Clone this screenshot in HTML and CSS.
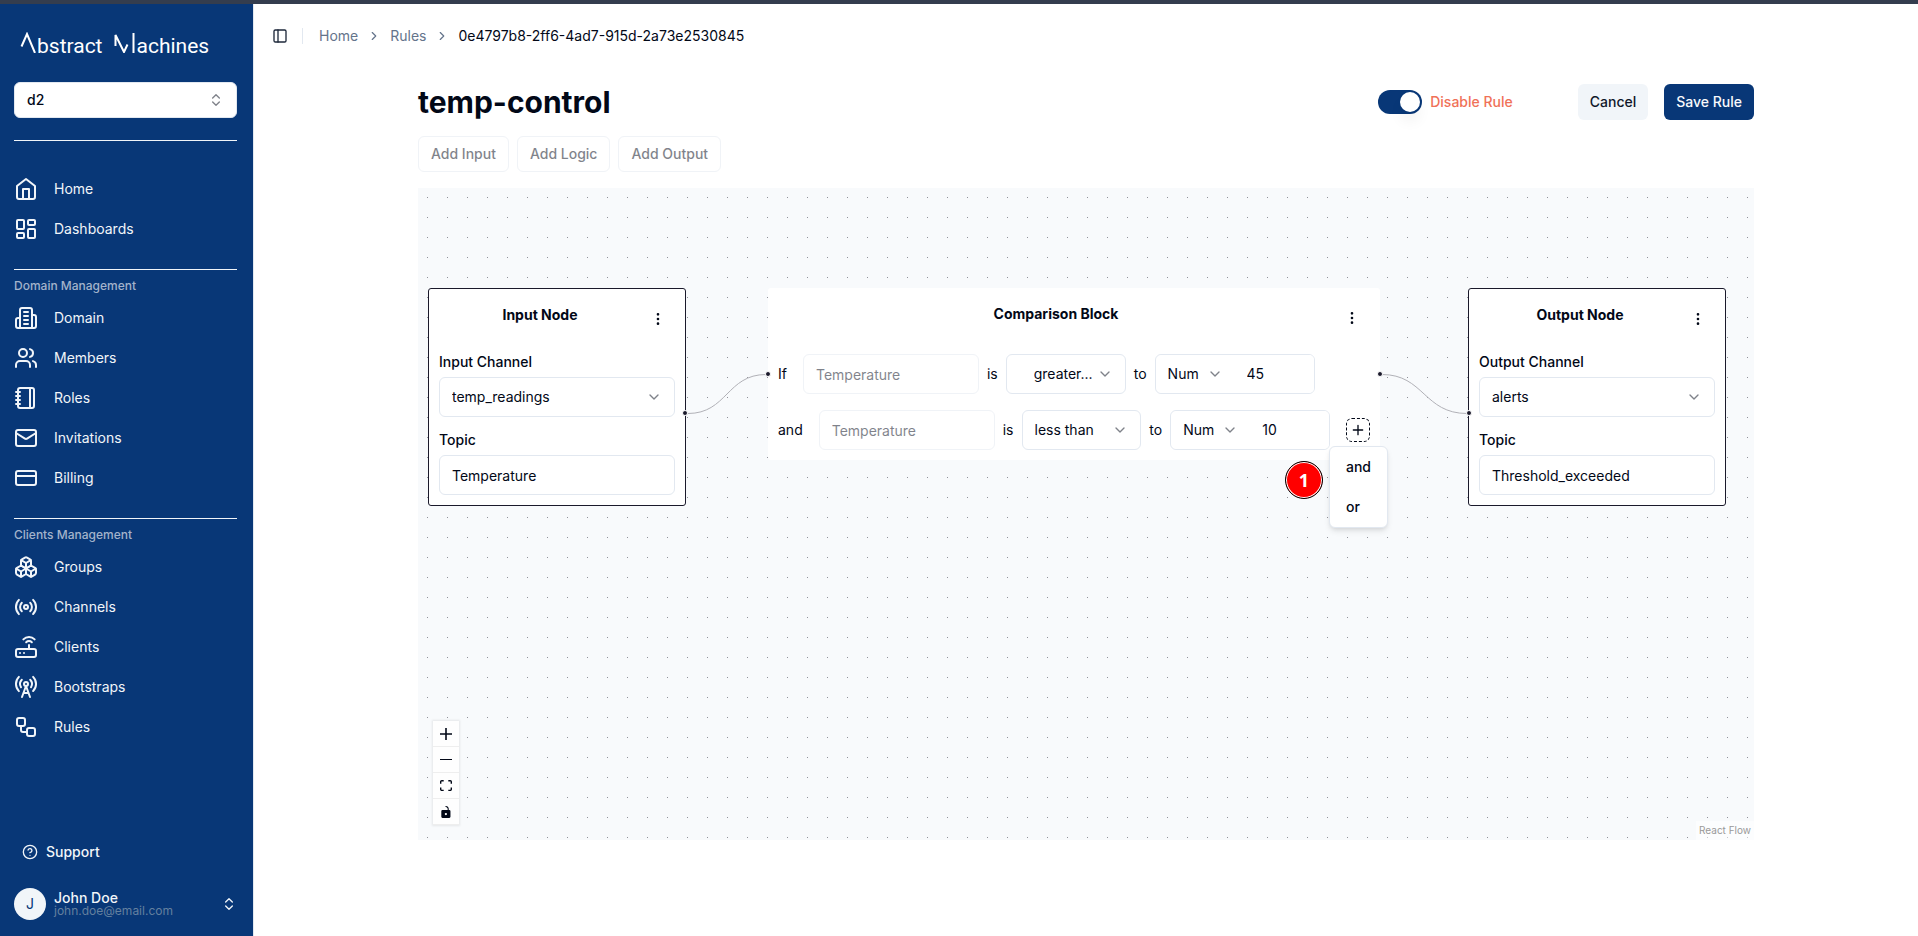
FILE: index.html
```html
<!DOCTYPE html>
<html lang="en">
<head>
<meta charset="utf-8">
<title>temp-control</title>
<link rel="stylesheet" href="styles.css">
</head>
<body>
<svg class="sprite" aria-hidden="true">
  <symbol id="chevron-down" viewBox="0 0 24 24"><path d="m6 9 6 6 6-6"/></symbol>
  <symbol id="chevron-right" viewBox="0 0 24 24"><path d="m9 18 6-6-6-6"/></symbol>
  <symbol id="chevrons" viewBox="0 0 24 24"><path d="m7 15 5 5 5-5M7 9l5-5 5 5"/></symbol>
  <symbol id="dots" viewBox="0 0 24 24"><circle cx="12" cy="12" r="1"/><circle cx="12" cy="5" r="1"/><circle cx="12" cy="19" r="1"/></symbol>
</svg>
<div class="app">
  <aside class="sidebar">
    <div class="logo" role="img" aria-label="Abstract Machines">
      <svg class="logo-mark" width="17" height="21" viewBox="0 0 17 21"><path d="M1.500 14.500 7 2 15 21"/></svg>
      <span class="logo-text">bstract</span>
      <svg class="logo-mark logo-mark-second" width="23" height="21" viewBox="0 0 23 21"><path d="M1.500 14V3L10 20 13.500 12.500M19.500 1v20"/></svg>
      <span class="logo-text">achines</span>
    </div>
    <div class="select-wrap domain-select">
      <select aria-label="Domain"><option>d2</option></select>
      <svg class="icon small"><use href="#chevrons"/></svg>
    </div>
    <nav class="nav">
      <section class="group group-first">
        <a href="#"><svg class="icon" viewBox="0 0 24 24"><path d="m3 9 9-7 9 7v11a2 2 0 0 1-2 2H5a2 2 0 0 1-2-2z"/><path d="M9 22V12h6v10"/></svg>Home</a>
        <a href="#"><svg class="icon" viewBox="0 0 24 24"><rect width="7" height="9" x="3" y="3" rx="1"/><rect width="7" height="5" x="14" y="3" rx="1"/><rect width="7" height="9" x="14" y="12" rx="1"/><rect width="7" height="5" x="3" y="16" rx="1"/></svg>Dashboards</a>
      </section>
      <section class="group">
        <h2>Domain Management</h2>
        <a href="#"><svg class="icon" viewBox="0 0 24 24"><path d="M6 22V4a2 2 0 0 1 2-2h8a2 2 0 0 1 2 2v18Z"/><path d="M6 12H4a2 2 0 0 0-2 2v6a2 2 0 0 0 2 2h2M18 9h2a2 2 0 0 1 2 2v9a2 2 0 0 1-2 2h-2M10 6h4M10 10h4M10 14h4M10 18h4"/></svg>Domain</a>
        <a href="#"><svg class="icon" viewBox="0 0 24 24"><path d="M16 21v-2a4 4 0 0 0-4-4H6a4 4 0 0 0-4 4v2"/><circle cx="9" cy="7" r="4"/><path d="M22 21v-2a4 4 0 0 0-3-3.870M16 3.130a4 4 0 0 1 0 7.750"/></svg>Members</a>
        <a href="#"><svg class="icon" viewBox="0 0 24 24"><path d="M2 6h4M2 10h4M2 14h4M2 18h4M16 2v20"/><rect width="16" height="20" x="4" y="2" rx="2"/></svg>Roles</a>
        <a href="#"><svg class="icon" viewBox="0 0 24 24"><rect width="20" height="16" x="2" y="4" rx="2"/><path d="m22 7-8.970 5.700a1.940 1.940 0 0 1-2.060 0L2 7"/></svg>Invitations</a>
        <a href="#"><svg class="icon" viewBox="0 0 24 24"><rect width="20" height="14" x="2" y="5" rx="2"/><path d="M2 10h20"/></svg>Billing</a>
      </section>
      <section class="group">
        <h2>Clients Management</h2>
        <a href="#"><svg class="icon" viewBox="0 0 24 24"><path d="M2.970 12.920A2 2 0 0 0 2 14.630v3.240a2 2 0 0 0 .970 1.710l3 1.800a2 2 0 0 0 2.060 0L12 19v-5.500l-5-3-4.030 2.420Z"/><path d="m7 16.500-4.740-2.850M7 16.500l5-3M7 16.500v5.170"/><path d="M12 13.500V19l3.970 2.380a2 2 0 0 0 2.060 0l3-1.800a2 2 0 0 0 .970-1.710v-3.240a2 2 0 0 0-.970-1.710L17 10.500l-5 3Z"/><path d="m17 16.500-5-3M17 16.500l4.740-2.850M17 16.500v5.170"/><path d="M7.970 4.420A2 2 0 0 0 7 6.130v4.370l5 3 5-3V6.130a2 2 0 0 0-.970-1.710l-3-1.800a2 2 0 0 0-2.060 0l-3 1.800Z"/><path d="M12 8 7.260 5.150M12 8l4.740-2.850M12 13.500V8"/></svg>Groups</a>
        <a href="#"><svg class="icon" viewBox="0 0 24 24"><path d="M4.900 19.100C1 15.200 1 8.800 4.900 4.900M7.800 16.200c-2.300-2.300-2.300-6.100 0-8.500M16.200 7.800c2.300 2.300 2.300 6.100 0 8.500M19.100 4.900C23 8.800 23 15.100 19.100 19"/><circle cx="12" cy="12" r="2"/></svg>Channels</a>
        <a href="#"><svg class="icon" viewBox="0 0 24 24"><rect width="20" height="8" x="2" y="14" rx="2"/><path d="M6.010 18H6M10.010 18H10M15 10v4M17.840 7.170a4 4 0 0 0-5.660 0M20.660 4.340a8 8 0 0 0-11.310 0"/></svg>Clients</a>
        <a href="#"><svg class="icon" viewBox="0 0 24 24"><path d="M4.900 16.100C1 12.200 1 5.800 4.900 1.900M7.800 4.700a6.140 6.140 0 0 0-.8 7.500M16.200 4.800c2 2 2.260 5.110.8 7.470M19.100 1.900a9.960 9.960 0 0 1 0 14.100M9.500 18h5M8 22l4-11 4 11"/><circle cx="12" cy="9" r="2"/></svg>Bootstraps</a>
        <a href="#"><svg class="icon" viewBox="0 0 24 24"><rect width="8" height="8" x="3" y="3" rx="2"/><path d="M7 11v4a2 2 0 0 0 2 2h4"/><rect width="8" height="8" x="13" y="13" rx="2"/></svg>Rules</a>
      </section>
    </nav>
    <footer class="sidebar-footer">
      <a class="support" href="#"><svg class="icon small" viewBox="0 0 24 24"><circle cx="12" cy="12" r="10"/><path d="M9.090 9a3 3 0 0 1 5.830 1c0 2-3 3-3 3M12 17h.010"/></svg>Support</a>
      <button class="user" type="button">
        <span class="avatar">J</span>
        <span class="user-info"><span class="user-name">John Doe</span><span class="user-email">john.doe@email.com</span></span>
        <svg class="icon small"><use href="#chevrons"/></svg>
      </button>
    </footer>
  </aside>

  <div class="page">
    <header class="topbar">
      <button class="bare" type="button" aria-label="Toggle sidebar"><svg class="icon small" viewBox="0 0 24 24"><rect width="18" height="18" x="3" y="3" rx="2"/><path d="M9 3v18"/></svg></button>
      <span class="divider"></span>
      <nav class="crumbs" aria-label="Breadcrumb">
        <a href="#">Home</a>
        <svg class="icon tiny"><use href="#chevron-right"/></svg>
        <a href="#">Rules</a>
        <svg class="icon tiny"><use href="#chevron-right"/></svg>
        <span class="current">0e4797b8-2ff6-4ad7-915d-2a73e2530845</span>
      </nav>
    </header>
    <main class="content">
      <div class="title-row">
        <h1>temp-control</h1>
        <label class="toggle"><input type="checkbox" role="switch" checked>Disable Rule</label>
        <div class="actions">
          <button class="btn secondary" type="button">Cancel</button>
          <button class="btn primary" type="button">Save Rule</button>
        </div>
      </div>
      <div class="add-row">
        <button class="btn outline" type="button" disabled>Add Input</button>
        <button class="btn outline" type="button" disabled>Add Logic</button>
        <button class="btn outline" type="button" disabled>Add Output</button>
      </div>
      <div class="canvas">
        <svg class="edges" width="1336" height="400" viewBox="0 0 1336 400">
          <path d="M270 225.500C309 225.500 309 186.500 348 186.500"/>
          <path d="M964 186.500C1006 186.500 1006 225.500 1049 225.500"/>
        </svg>

        <section class="node node-input">
          <header class="node-head"><h3>Input Node</h3><button class="bare menu-btn" type="button" aria-label="Input node menu"><svg class="icon small"><use href="#dots"/></svg></button></header>
          <div class="field">
            <label for="in-channel">Input Channel</label>
            <div class="select-wrap"><select id="in-channel"><option>temp_readings</option></select><svg class="icon small"><use href="#chevron-down"/></svg></div>
          </div>
          <div class="field">
            <label for="in-topic">Topic</label>
            <input class="box" id="in-topic" type="text" value="Temperature">
          </div>
          <span class="handle handle-right"></span>
        </section>

        <section class="node node-compare">
          <header class="node-head"><h3>Comparison Block</h3><button class="bare menu-btn" type="button" aria-label="Comparison block menu"><svg class="icon small"><use href="#dots"/></svg></button></header>
          <div class="cond">
            <span class="lead">If</span>
            <input class="box faded" type="text" value="Temperature" aria-label="First field" disabled>
            <span>is</span>
            <div class="select-wrap op op-clipped"><select aria-label="First operator"><option>greater...</option></select><svg class="icon small"><use href="#chevron-down"/></svg></div>
            <span>to</span>
            <div class="value">
              <div class="select-wrap"><select aria-label="First value type"><option>Num</option></select><svg class="icon small"><use href="#chevron-down"/></svg></div>
              <input type="text" value="45" aria-label="First value">
            </div>
          </div>
          <div class="cond">
            <span class="lead">and</span>
            <input class="box faded" type="text" value="Temperature" aria-label="Second field" disabled>
            <span>is</span>
            <div class="select-wrap op"><select aria-label="Second operator"><option>less than</option></select><svg class="icon small"><use href="#chevron-down"/></svg></div>
            <span>to</span>
            <div class="value">
              <div class="select-wrap"><select aria-label="Second value type"><option>Num</option></select><svg class="icon small"><use href="#chevron-down"/></svg></div>
              <input type="text" value="10" aria-label="Second value">
            </div>
            <button class="add-cond" type="button" aria-label="Add condition"><svg class="icon small" viewBox="0 0 24 24"><path d="M5 12h14M12 5v14"/></svg></button>
          </div>
          <span class="handle handle-left"></span>
          <span class="handle handle-right"></span>
          <div class="popover">
            <button type="button">and</button>
            <button type="button">or</button>
          </div>
          <span class="badge">1</span>
        </section>

        <section class="node node-output">
          <header class="node-head"><h3>Output Node</h3><button class="bare menu-btn" type="button" aria-label="Output node menu"><svg class="icon small"><use href="#dots"/></svg></button></header>
          <div class="field">
            <label for="out-channel">Output Channel</label>
            <div class="select-wrap"><select id="out-channel"><option>alerts</option></select><svg class="icon small"><use href="#chevron-down"/></svg></div>
          </div>
          <div class="field">
            <label for="out-topic">Topic</label>
            <input class="box" id="out-topic" type="text" value="Threshold_exceeded">
          </div>
          <span class="handle handle-left"></span>
        </section>

        <div class="controls">
          <button type="button" aria-label="Zoom in"><svg viewBox="0 0 32 32"><path d="M32 18.133H18.133V32h-4.266V18.133H0v-4.266h13.867V0h4.266v13.867H32z"/></svg></button>
          <button type="button" aria-label="Zoom out"><svg viewBox="0 0 32 5"><path d="M0 0h32v4.200H0z"/></svg></button>
          <button type="button" aria-label="Fit view"><svg viewBox="0 0 32 30"><path d="M3.692 4.630c0-.530.400-.938.939-.938h5.215V0H4.708C2.130 0 0 2.054 0 4.630v5.216h3.692V4.631zM27.354 0h-5.200v3.692h5.170c.530 0 .984.400.984.939v5.215H32V4.631A4.624 4.624 0 0027.354 0zm.954 24.830c0 .532-.400.940-.939.940h-5.215v3.768h5.215c2.577 0 4.631-2.130 4.631-4.707v-5.139h-3.692v5.139zm-23.677.940a.919.919 0 01-.939-.940v-5.138H0v5.139c0 2.577 2.130 4.707 4.708 4.707h5.138V25.770H4.631z"/></svg></button>
          <button type="button" aria-label="Toggle lock"><svg viewBox="0 0 25 32"><path d="M21.333 10.667H19.810V7.619C19.810 3.429 16.380 0 12.190 0c-4.114 1.828-1.370 2.133.305 2.438 1.676.305 4.420 2.590 4.420 5.181v3.048H3.047A3.056 3.056 0 000 13.714v15.238A3.056 3.056 0 003.048 32h18.285a3.056 3.056 0 003.048-3.048V13.714a3.056 3.056 0 00-3.048-3.047zM12.190 24.533a3.056 3.056 0 01-3.047-3.047 3.056 3.056 0 013.047-3.048 3.056 3.056 0 013.048 3.048 3.056 3.056 0 01-3.048 3.047z"/></svg></button>
        </div>
        <a class="attribution" href="#">React Flow</a>
      </div>
    </main>
  </div>
</div>
</body>
</html>
```
FILE: styles.css
```css
* { box-sizing: border-box; }
body { margin: 0; background: #fff; color: #020817; font: 14px/20px Inter, sans-serif; }
h1, h2, h3 { margin: 0; }
a { color: inherit; text-decoration: none; }
button, input, select { margin: 0; font: inherit; color: inherit; }
.sprite { position: absolute; width: 0; height: 0; }
.icon { width: 24px; height: 24px; flex: none; fill: none; stroke: currentColor; stroke-width: 2; stroke-linecap: round; stroke-linejoin: round; }
.icon.small { width: 16px; height: 16px; }
.icon.tiny { width: 14px; height: 14px; }
.bare { padding: 0; border: 0; background: none; display: flex; align-items: center; justify-content: center; }

.app { display: flex; min-height: 100vh; border-top: 4px solid #343d4e; }

.sidebar { width: 254px; flex: none; display: flex; flex-direction: column; padding: 28px 16px 16px 14px; background: #083777; border-right: 1px solid #e2e8f0; color: #f1f5f9; }
.logo { display: flex; align-items: baseline; height: 22px; margin: 0 0 28px 6px; }
.logo-mark { flex: none; fill: none; stroke: #fff; stroke-width: 2; }
.logo-mark-second { margin-left: 11px; }
.logo-text { font: 21px/22px Roboto, sans-serif; color: #fff; }
.select-wrap { position: relative; display: flex; color: #020817; }
.select-wrap select { appearance: none; width: 100%; height: 40px; padding: 0 32px 0 12px; border: 1px solid #e2e8f0; border-radius: 6px; background: #fff; }
.select-wrap .icon { position: absolute; right: 13px; top: 50%; margin-top: -8px; opacity: .5; pointer-events: none; }
.domain-select select { height: 36px; font-weight: 500; }
.group { display: flex; flex-direction: column; margin-top: 20px; padding-top: 6px; border-top: 1px solid #f1f5f9; }
.group-first { padding-top: 28px; margin-top: 22px; }
.group h2 { font-size: 12px; line-height: 20px; font-weight: 500; margin-bottom: 2px; color: #a3b3cb; }
.group a { display: flex; align-items: center; gap: 16px; height: 40px; }
.sidebar-footer { margin-top: auto; display: flex; flex-direction: column; gap: 26px; }
.support { display: flex; align-items: center; gap: 8px; padding-left: 8px; font-weight: 500; }
.user { display: flex; align-items: center; gap: 8px; padding: 0; border: 0; background: none; text-align: left; }
.avatar { width: 32px; height: 32px; border-radius: 50%; display: grid; place-items: center; background: #f1f5f9; color: #083777; }
.user-info { flex: 1; display: flex; flex-direction: column; line-height: 14px; }
.user-name { font-weight: 500; }
.user-email { font-size: 12px; line-height: 12px; color: #64809f; }

.page { flex: 1; min-width: 0; display: flex; flex-direction: column; }
.topbar { display: flex; align-items: center; height: 64px; padding: 0 18px; }
.topbar .bare { color: #1e293b; }
.divider { width: 1px; height: 16px; margin: 0 16px 0 14px; background: #e2e8f0; }
.crumbs { display: flex; align-items: center; gap: 9px; color: #64748b; }
.current { color: #020817; }
.content { flex: 1; display: flex; flex-direction: column; gap: 16px; width: 100%; max-width: 1400px; margin: 0 auto; padding: 16px 32px 96px; }
.title-row { display: flex; align-items: center; }
.title-row h1 { flex: 1; font-size: 30px; line-height: 36px; font-weight: 700; }
.toggle { display: flex; align-items: center; gap: 8px; color: #f07158; font-weight: 500; }
.toggle input { appearance: none; width: 44px; height: 24px; margin: 0; padding: 2px; border-radius: 12px; background: #083777; display: flex; justify-content: flex-end; }
.toggle input::before { content: ""; width: 20px; height: 20px; border-radius: 50%; background: #fff; box-shadow: 0 10px 15px -3px rgba(0, 0, 0, .1); }
.actions { display: flex; gap: 16px; margin-left: 65px; }
.btn { height: 36px; padding: 0 12px; border: 0; border-radius: 6px; font-weight: 500; }
.secondary { background: #f1f5f9; color: #0f172a; }
.primary { background: #083777; color: #f8fafc; }
.outline { border: 1px solid #e2e8f0; background: #fff; opacity: .5; }
.add-row { display: flex; gap: 8px; }

.canvas { position: relative; flex: 1; min-height: 480px; overflow: hidden; background: #f8fafc conic-gradient(from 270deg at 1px 1px, #91919a 90deg, transparent 0) 9px 9px / 20px 20px; }
.edges { position: absolute; left: 0; top: 0; fill: none; stroke: #b1b1b7; }
.node { position: absolute; top: 100px; padding: 10px; border-radius: 3px; background: #fff; }
.node-input, .node-output { width: 258px; border: 1px solid #1a192b; }
.node-input { left: 10px; }
.node-compare { left: 350px; width: 612px; }
.node-output { left: 1050px; }
.node-head { display: flex; height: 40px; }
.node-head h3 { flex: 1; padding-top: 6px; font-size: 14px; line-height: 20px; font-weight: 700; text-align: center; }
.menu-btn { width: 34px; }
.node-compare .menu-btn { width: 36px; }
.field { display: flex; flex-direction: column; gap: 5px; margin-top: 13px; }
.field label { font-weight: 500; }
.box { width: 100%; height: 40px; padding: 0 12px; border: 1px solid #e2e8f0; border-radius: 6px; background: #fff; }
.cond { display: flex; align-items: center; gap: 8px; margin-top: 16px; }
.lead { margin-right: 8px; }
.cond .box { width: 176px; }
.faded { opacity: .5; }
.op { width: 120px; }
.op-clipped select { padding: 0 24px 0 27px; }
.value { display: flex; width: 160px; height: 40px; border: 1px solid #e2e8f0; border-radius: 6px; overflow: hidden; }
.value .select-wrap { width: 79px; flex: none; }
.value .icon { right: 12px; }
.value select { height: 100%; border: 0; }
.value input { width: 100%; min-width: 0; border: 0; padding: 0 12px; background: #fff; }
.add-cond { display: grid; place-items: center; width: 24px; height: 24px; margin-left: 8px; padding: 0; border: 1px dashed #020817; border-radius: 6px; background: #fff; }
.handle { position: absolute; width: 6px; height: 6px; border: 1px solid #fff; border-radius: 50%; background: #1a192b; }
.node-compare .handle { top: 83px; }
.node-input .handle, .node-output .handle { top: 121px; }
.handle-left { left: -3px; }
.handle-right { right: -3px; }
.popover { position: absolute; left: 561px; top: 158px; width: 59px; padding: 0; display: flex; flex-direction: column; border: 1px solid #e2e8f0; border-radius: 6px; background: #fff; box-shadow: 0 4px 6px -1px rgba(0, 0, 0, .1), 0 2px 4px -2px rgba(0, 0, 0, .1); }
.popover button { height: 40px; padding: 0 16px; border: 0; background: none; text-align: left; font-weight: 500; }
.badge { position: absolute; left: 517px; top: 173px; width: 38px; height: 38px; display: grid; place-items: center; border: 1px solid #000; border-radius: 50%; background: #f00; box-shadow: inset 0 0 0 1px #fff; color: #fff; font: 700 18px/20px "Open Sans", sans-serif; }
.controls { position: absolute; left: 15px; bottom: 15px; display: flex; flex-direction: column; box-shadow: 0 0 2px 1px rgba(0, 0, 0, .08); }
.controls button { display: grid; place-items: center; width: 26px; height: 26px; padding: 5px; border: 0; border-bottom: 1px solid #eee; background: #fefefe; }
.controls svg { width: 12px; max-height: 12px; fill: #020817; }
.attribution { position: absolute; right: 0; bottom: 0; padding: 2px 3px; background: rgba(255, 255, 255, .5); color: #999; font-size: 10px; line-height: 15px; }
```
